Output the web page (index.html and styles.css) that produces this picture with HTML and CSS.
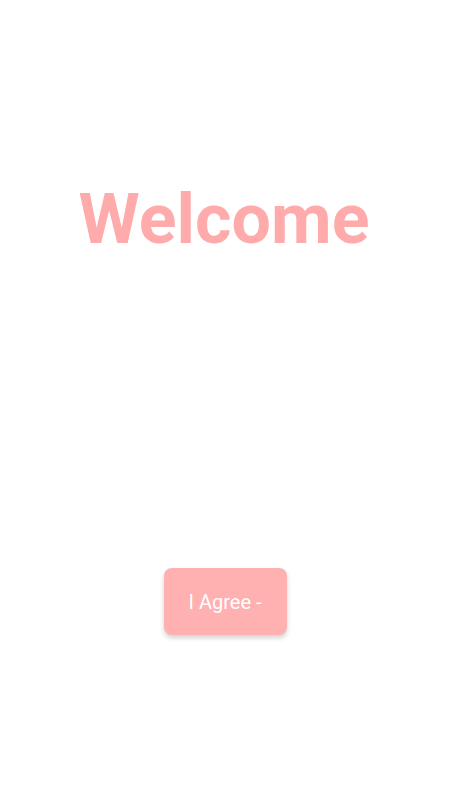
FILE: index.html
```html
<!DOCTYPE html>
<html lang="en">
<head>
  <meta charset="UTF-8">
  <meta name="viewport" content="width=device-width, initial-scale=1.0">
  <title>Welcome</title>
  <link rel="stylesheet" href="styles.css">
</head>
<body>
  <div class="screen">
    <h1 class="title">Welcome</h1>
    <button class="agree-btn">I Agree -</button>
  </div>
</body>
</html>
```

FILE: styles.css
```css
/* General Styles */
body {
  margin: 0;
  padding: 0;
  background-color: #fff;
  font-family: Roboto, "Noto Sans", sans-serif;
}

.screen {
  display: flex;
  flex-direction: column;
  align-items: center;
  height: 800px;
  padding-top: 184px;
  box-sizing: border-box;
}

.title {
  margin: 0 0 0 -2px;
  font-size: 70px;
  line-height: 70px;
  font-weight: 700;
  color: #ffabab;
}

/* Agree Button */
.agree-btn {
  margin-top: 314px;
  width: 123px;
  height: 67px;
  padding: 0;
  border: none;
  border-radius: 8px;
  background-color: #ffb0b0;
  color: #fff;
  font-family: Roboto, "Noto Sans", sans-serif;
  font-size: 20px;
  box-shadow: 0 3px 5px rgba(0, 0, 0, 0.18);
  cursor: pointer;
}
```
